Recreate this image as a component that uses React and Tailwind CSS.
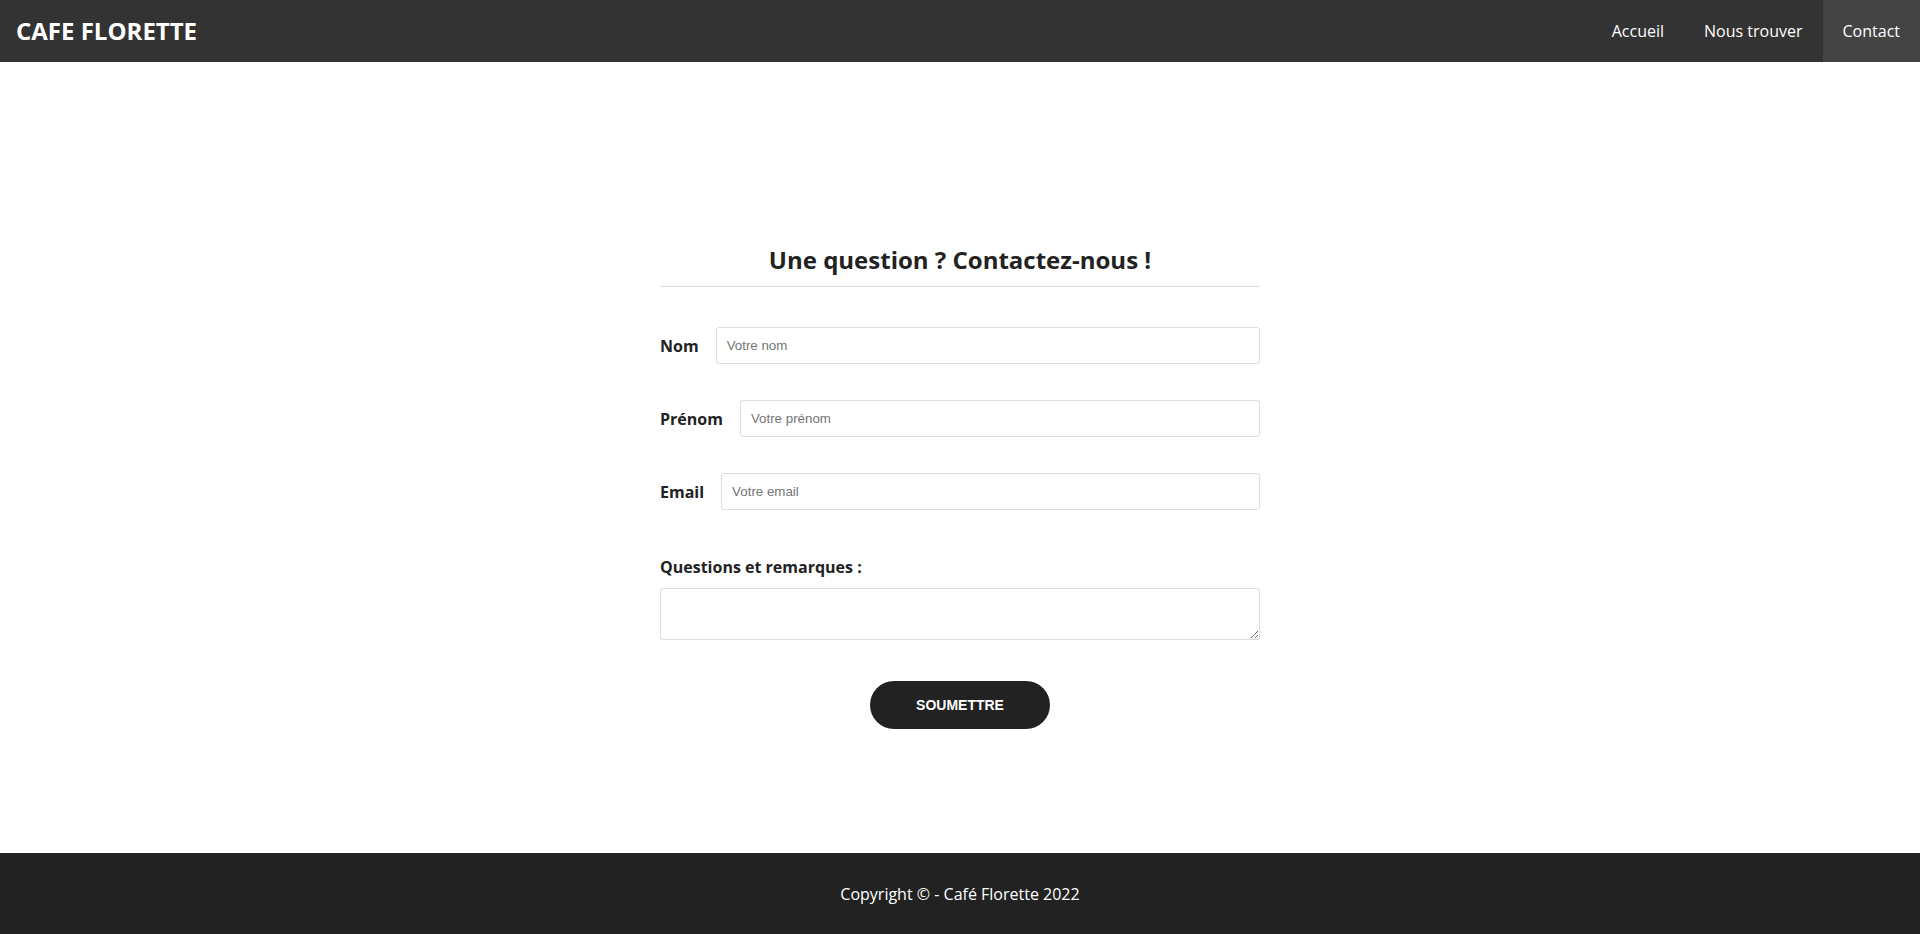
import { useState } from "react";

const navLinks = [
  { id: "accueil", label: "Accueil" },
  { id: "trouver", label: "Nous trouver" },
  { id: "contact", label: "Contact" },
];

function Header({ active }) {
  return (
    <header className="h-[62px] bg-[#333333] flex items-center justify-between">
      <div className="pl-4 text-white font-bold text-[24px] leading-none">
        CAFE FLORETTE
      </div>
      <nav className="flex h-full">
        {navLinks.map((link) => (
          <a
            key={link.id}
            href="#"
            className={
              "h-full flex items-center px-5 text-white text-[16px] " +
              (active === link.id ? "bg-[#444444]" : "")
            }
          >
            {link.label}
          </a>
        ))}
      </nav>
    </header>
  );
}

function Field({ label, name, placeholder, value, onChange }) {
  return (
    <div className="flex items-center gap-[17px]">
      <label htmlFor={name} className="font-bold text-[16px] text-[#222222] whitespace-nowrap">
        {label}
      </label>
      <input
        id={name}
        type="text"
        value={value}
        onChange={(e) => onChange(name, e.target.value)}
        placeholder={placeholder}
        className="flex-1 h-[37px] border border-[#dddddd] rounded-[3px] px-[10px] text-[13.33px] placeholder:text-[#757575] outline-none"
        style={{ fontFamily: '"Liberation Sans", Arial, sans-serif' }}
      />
    </div>
  );
}

export default function App() {
  const [form, setForm] = useState({ nom: "", prenom: "", email: "", message: "" });

  const handleChange = (name, value) => {
    setForm((f) => ({ ...f, [name]: value }));
  };

  return (
    <div
      className="min-h-screen flex flex-col bg-white"
      style={{ fontFamily: '"Open Sans", "Noto Sans", sans-serif' }}
    >
      <Header active="contact" />

      <main className="flex-1 h-[791px]">
        <form className="w-[600px] mx-auto pt-[182px]" onSubmit={(e) => e.preventDefault()}>
          <h1 className="text-center font-bold text-[24px] leading-[32px] text-[#222222] pb-[10px] border-b border-[#dddddd]">
            Une question ? Contactez-nous !
          </h1>

          <div className="mt-[40px] flex flex-col gap-[36px]">
            <Field label="Nom" name="nom" placeholder="Votre nom" value={form.nom} onChange={handleChange} />
            <Field label="Prénom" name="prenom" placeholder="Votre prénom" value={form.prenom} onChange={handleChange} />
            <Field label="Email" name="email" placeholder="Votre email" value={form.email} onChange={handleChange} />
          </div>

          <label htmlFor="message" className="block mt-[45px] font-bold text-[16px] leading-[24px] text-[#222222]">
            Questions et remarques :
          </label>
          <textarea
            id="message"
            value={form.message}
            onChange={(e) => handleChange("message", e.target.value)}
            className="block w-full h-[52px] mt-[9px] border border-[#dddddd] rounded-[3px] outline-none"
          />

          <div className="flex justify-center mt-[41px]">
            <button
              type="submit"
              className="w-[180px] h-[48px] rounded-full bg-[#222222] text-white font-bold text-[14px]"
              style={{ fontFamily: '"Liberation Sans", Arial, sans-serif' }}
            >
              SOUMETTRE
            </button>
          </div>
        </form>
      </main>

      <footer className="h-[81px] bg-[#222222] flex items-center justify-center">
        <p className="text-white text-[16px]">Copyright © - Café Florette 2022</p>
      </footer>
    </div>
  );
}
